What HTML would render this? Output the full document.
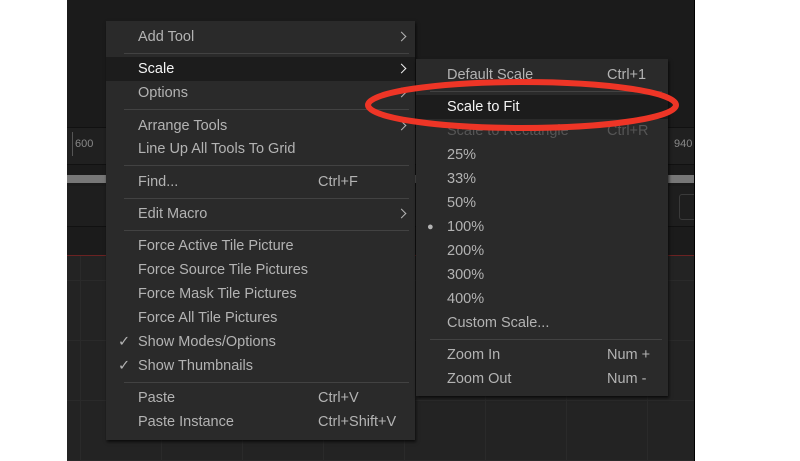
<!DOCTYPE html><html><head><style>
body{margin:0;width:800px;height:461px;background:#fff;position:relative;overflow:hidden;font-family:"Liberation Sans",sans-serif}
.app{position:absolute;left:67px;top:0;width:627px;height:461px;background:#1b1b1b;border-right:1px solid #000;overflow:hidden}
.a{position:absolute;left:0;width:627px}
.menu{position:absolute;background:#2a2a2a;box-shadow:1px 2px 3px rgba(0,0,0,.7)}
.it{position:absolute;left:0;right:0;height:24px;line-height:24px;font-size:14.5px;color:#b3b3b3;letter-spacing:0}
.it span{position:absolute}
.it b{position:absolute;left:292px;top:8px;width:6px;height:6px;border-top:1.5px solid #b3b3b3;border-right:1.5px solid #b3b3b3;transform:rotate(45deg)}
.sep{position:absolute;height:1px;background:#424242}
.hl{background:#1c1c1c;color:#f4f4f4}
.hl b{border-color:#eee}
</style></head><body>
<div class="app">
<div class="a" style="top:127px;height:36px;background:#202020;border-top:1px solid #111;border-bottom:1px solid #111"></div>
<div style="position:absolute;left:5px;top:132px;height:24px;width:1px;background:#555"></div>
<div style="position:absolute;left:8px;top:138px;font-size:11px;color:#888">600</div>
<div style="position:absolute;left:607px;top:138px;font-size:11px;color:#888">940</div>
<div class="a" style="top:175px;height:8px;background:#777"></div>
<div class="a" style="top:186px;height:40px;background:#1e1e1e;border-bottom:1px solid #111"></div>
<div style="position:absolute;left:612px;top:194px;width:20px;height:24px;border:1px solid #3a3a3a;border-radius:3px"></div>
<div class="a" style="top:255px;height:1px;background:#6b2222"></div>
<div class="a" style="top:256px;height:205px;background:#232323;background-image:linear-gradient(90deg,#2a2a2a 1px,transparent 1px),linear-gradient(#2a2a2a 1px,transparent 1px);background-size:81px 60px;background-position:13px 0,0 24px"></div>
</div>

<div class="menu" style="left:106px;top:21px;width:309px;height:419px">
<div class="it" style="top:4px"><span style="left:32px">Add Tool</span><b></b></div>
<div class="sep" style="left:18px;right:6px;top:32px"></div>
<div class="it hl" style="top:36px"><span style="left:32px">Scale</span><b></b></div>
<div class="it" style="top:60px"><span style="left:32px">Options</span><b></b></div>
<div class="sep" style="left:18px;right:6px;top:88px"></div>
<div class="it" style="top:93px"><span style="left:32px">Arrange Tools</span><b></b></div>
<div class="it" style="top:116px"><span style="left:32px">Line Up All Tools To Grid</span></div>
<div class="sep" style="left:18px;right:6px;top:144px"></div>
<div class="it" style="top:149px"><span style="left:32px">Find...</span><span style="left:212px">Ctrl+F</span></div>
<div class="sep" style="left:18px;right:6px;top:177px"></div>
<div class="it" style="top:181px"><span style="left:32px">Edit Macro</span><b></b></div>
<div class="sep" style="left:18px;right:6px;top:209px"></div>
<div class="it" style="top:213px"><span style="left:32px">Force Active Tile Picture</span></div>
<div class="it" style="top:237px"><span style="left:32px">Force Source Tile Pictures</span></div>
<div class="it" style="top:261px"><span style="left:32px">Force Mask Tile Pictures</span></div>
<div class="it" style="top:285px"><span style="left:32px">Force All Tile Pictures</span></div>
<div class="it" style="top:309px"><span style="left:12px">✓</span><span style="left:32px">Show Modes/Options</span></div>
<div class="it" style="top:333px"><span style="left:12px">✓</span><span style="left:32px">Show Thumbnails</span></div>
<div class="sep" style="left:18px;right:6px;top:361px"></div>
<div class="it" style="top:365px"><span style="left:32px">Paste</span><span style="left:212px">Ctrl+V</span></div>
<div class="it" style="top:389px"><span style="left:32px">Paste Instance</span><span style="left:212px">Ctrl+Shift+V</span></div>
</div>

<div class="menu" style="left:416px;top:59px;width:252px;height:337px">
<div class="it" style="top:4px"><span style="left:31px">Default Scale</span><span style="left:191px">Ctrl+1</span></div>
<div class="sep" style="left:14px;right:6px;top:32px"></div>
<div class="it hl" style="top:36px"><span style="left:31px">Scale to Fit</span></div>
<div class="it" style="top:60px;color:#555"><span style="left:31px">Scale to Rectangle</span><span style="left:191px">Ctrl+R</span></div>
<div class="it" style="top:84px"><span style="left:31px">25%</span></div>
<div class="it" style="top:108px"><span style="left:31px">33%</span></div>
<div class="it" style="top:132px"><span style="left:31px">50%</span></div>
<div class="it" style="top:156px"><span style="left:11px;font-size:11px">●</span><span style="left:31px">100%</span></div>
<div class="it" style="top:180px"><span style="left:31px">200%</span></div>
<div class="it" style="top:204px"><span style="left:31px">300%</span></div>
<div class="it" style="top:228px"><span style="left:31px">400%</span></div>
<div class="it" style="top:252px"><span style="left:31px">Custom Scale...</span></div>
<div class="sep" style="left:14px;right:6px;top:280px"></div>
<div class="it" style="top:284px"><span style="left:31px">Zoom In</span><span style="left:191px">Num +</span></div>
<div class="it" style="top:308px"><span style="left:31px">Zoom Out</span><span style="left:191px">Num -</span></div>
</div>

<svg style="position:absolute;left:0;top:0" width="800" height="461"><ellipse cx="522" cy="105" rx="154" ry="23" fill="none" stroke="#ee3526" stroke-width="6"/></svg>
</body></html>
